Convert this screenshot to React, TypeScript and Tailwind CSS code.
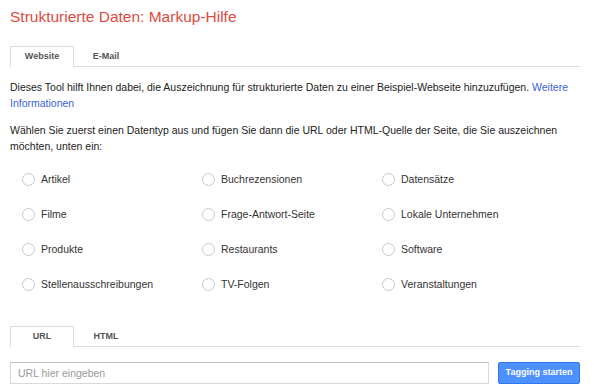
import { useState } from "react";

const types = [
  "Artikel",
  "Buchrezensionen",
  "Datensätze",
  "Filme",
  "Frage-Antwort-Seite",
  "Lokale Unternehmen",
  "Produkte",
  "Restaurants",
  "Software",
  "Stellenausschreibungen",
  "TV-Folgen",
  "Veranstaltungen",
];

function Tabs({ items, active, onChange }: { items: string[]; active: number; onChange: (i: number) => void }) {
  return (
    <div className="flex w-[570px] border-b border-[#dcdcdc]">
      {items.map((t, i) => (
        <button
          key={t}
          onClick={() => onChange(i)}
          className={`-mb-px flex h-[21px] w-[64px] items-center justify-center text-[9px] font-bold text-[#555] ${
            i === active ? "border border-b-0 border-[#dcdcdc] bg-white" : "border border-transparent"
          }`}
        >
          {t}
        </button>
      ))}
    </div>
  );
}

export default function App() {
  const [tab, setTab] = useState(0);
  const [source, setSource] = useState(0);
  const [selected, setSelected] = useState<string | null>(null);
  const [url, setUrl] = useState("");

  return (
    <div className="h-[392px] w-[600px] bg-white pl-[10px] pt-[7px] font-['Liberation_Sans',Arial,sans-serif] text-[10.5px] text-[#222]">
      <h1 className="h-[20px] text-[15.5px] leading-[20px] text-[#e04a3f]">Strukturierte Daten: Markup-Hilfe</h1>

      <div className="mt-[19px]">
        <Tabs items={["Website", "E-Mail"]} active={tab} onChange={setTab} />
      </div>

      <p className="mt-[12px] w-[570px] leading-[16px]">
        Dieses Tool hilft Ihnen dabei, die Auszeichnung für strukturierte Daten zu einer Beispiel-Webseite hinzuzufügen.{" "}
        <a href="#" className="text-[#3b5fd1]">Weitere Informationen</a>
      </p>
      <p className="mt-[11px] w-[570px] leading-[16px]">
        Wählen Sie zuerst einen Datentyp aus und fügen Sie dann die URL oder HTML-Quelle der Seite, die Sie auszeichnen möchten, unten ein:
      </p>

      <div className="mt-[8px] grid w-[552px] grid-cols-3 pl-[12px]">
        {types.map((t) => (
          <label key={t} className="flex h-[35px] cursor-pointer items-center gap-[6px] text-[#333]">
            <input
              type="radio"
              name="type"
              checked={selected === t}
              onChange={() => setSelected(t)}
              className="peer sr-only"
            />
            <span className="flex h-[13px] w-[13px] items-center justify-center rounded-full border border-[#c8c8c8] bg-white peer-checked:after:block peer-checked:after:h-[5px] peer-checked:after:w-[5px] peer-checked:after:rounded-full peer-checked:after:bg-[#555]" />
            <span>{t}</span>
          </label>
        ))}
      </div>

      <div className="mt-[24px]">
        <Tabs items={["URL", "HTML"]} active={source} onChange={setSource} />
      </div>

      <div className="mt-[15px] flex items-center gap-[9px]">
        <input
          value={url}
          onChange={(e) => setUrl(e.target.value)}
          placeholder="URL hier eingeben"
          className="h-[22px] w-[479px] border border-[#d9d9d9] border-t-[#c0c0c0] px-[7px] text-[10.5px] text-[#333] outline-none placeholder:text-[#999]"
        />
        <button className="h-[22px] w-[82px] rounded-[2px] border border-[#3079ed] bg-[#4d90fe] text-[9px] font-bold text-white">
          Tagging starten
        </button>
      </div>
    </div>
  );
}
